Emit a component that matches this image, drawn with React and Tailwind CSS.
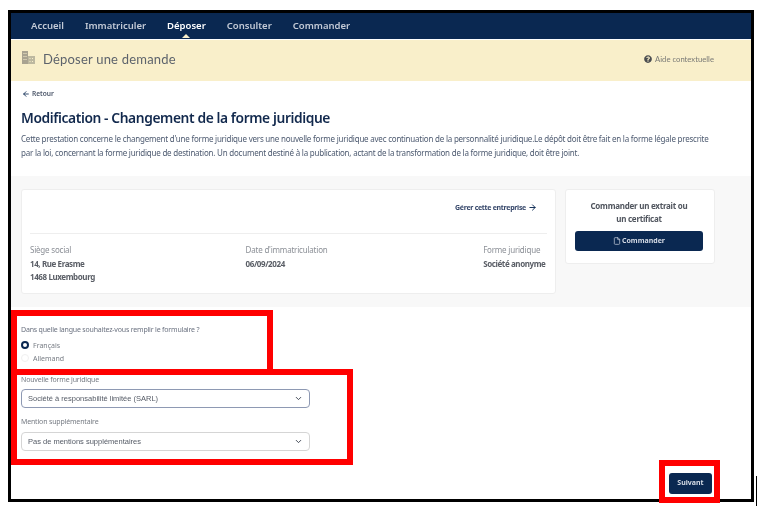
import React from "react";
import { ArrowLeft, ArrowRight, ChevronDown, File } from "lucide-react";
import { FaQuestionCircle } from "react-icons/fa";

const navItems = ["Accueil", "Immatriculer", "Déposer", "Consulter", "Commander"];

const BuildingIcon = () => (
  <svg width="15" height="15" viewBox="0 0 15 15" fill="none" className="text-[#8d8a7d]">
    <path d="M1 1h6v13H1z" fill="currentColor" opacity="0.75" />
    <path d="M7 6h7v8H7z" fill="currentColor" opacity="0.55" />
    <path d="M2.5 3h1v1h-1zM4.5 3h1v1h-1zM2.5 6h1v1h-1zM4.5 6h1v1h-1zM2.5 9h1v1h-1zM4.5 9h1v1h-1zM8.5 8h1v1h-1zM11 8h1v1h-1zM8.5 11h1v1h-1zM11 11h1v1h-1z" fill="#f9efca" />
  </svg>
);

const SelectBox = ({ value, className }) => (
  <div
    className={`flex h-[19px] w-[289px] items-center justify-between rounded-[4px] border bg-white pl-[6px] pr-[6px] font-['Liberation_Sans',sans-serif] text-[7.5px] text-[#555b66] ${className}`}
  >
    <span>{value}</span>
    <ChevronDown size={9} strokeWidth={2.5} className="text-[#3b4250]" />
  </div>
);

const InfoColumn = ({ label, children, className }) => (
  <div className={`flex flex-col ${className}`}>
    <span className="text-[8px] leading-[14px] tracking-[-0.2px] text-[#8b8f96]">{label}</span>
    {children}
  </div>
);

const Value = ({ children }) => (
  <span className="text-[8px] font-bold leading-[13.5px] tracking-[-0.4px] text-[#5a5e66]">{children}</span>
);

export default function App() {
  return (
    <div className="relative h-[512px] w-[766px] overflow-hidden bg-white font-['Noto_Sans',sans-serif]">
      <div className="ml-2 mt-[10px] flex h-[492px] w-[746px] flex-col border-[3px] border-black bg-white blur-[0.4px]">
        <nav className="flex h-[26px] shrink-0 items-center gap-[21px] bg-[#0a2851] pl-[20px] text-[9.5px] font-semibold text-[#c3cad6]">
          {navItems.map((item) => (
            <span key={item} className={`relative ${item === "Déposer" ? "text-white" : ""}`}>
              {item}
              {item === "Déposer" && (
                <span className="absolute left-1/2 top-[15px] -ml-1 h-0 w-0 border-x-4 border-b-4 border-x-transparent border-b-[#f9efca]" />
              )}
            </span>
          ))}
        </nav>
        <div className="mt-px flex h-[41px] shrink-0 items-center justify-between bg-[#f9efca] pl-[10px] pr-[37px]">
          <div className="-mt-[2px] flex items-center gap-[7px]">
            <span className="-mt-[5px]">
              <BuildingIcon />
            </span>
            <span className="font-['Lato',sans-serif] text-[13px] tracking-[0.2px] text-[#5d636c]">
              Déposer une demande
            </span>
          </div>
          <div className="-mt-[2px] flex items-center gap-[3px] font-['Lato',sans-serif] text-[7.7px] text-[#7a7a76]">
            <FaQuestionCircle size={8} className="text-[#4b4d50]" />
            <span>Aide contextuelle</span>
          </div>
        </div>
        <div className="flex flex-col px-[10px] pt-[8px]">
          <div className="flex items-center gap-[2px] pl-px text-[6.6px] font-semibold text-[#4a5568]">
            <ArrowLeft size={8} strokeWidth={2.5} className="text-[#0a2851]" />
            <span>Retour</span>
          </div>
          <h1 className="mt-[8px] text-[13.8px] font-semibold leading-[22px] tracking-[-0.4px] text-[#12294d]">
            Modification - Changement de la forme juridique
          </h1>
          <p className="mt-[3px] w-[700px] text-[8px] leading-[14px] tracking-[-0.22px] text-[#4d5a70]">
            Cette prestation concerne le changement d'une forme juridique vers une nouvelle forme juridique avec continuation de la personnalité juridique.Le dépôt doit être fait en la forme légale prescrite par la loi, concernant la forme juridique de destination. Un document destiné à la publication, actant de la transformation de la forme juridique, doit être joint.
          </p>
        </div>
        <section className="mt-[16px] flex h-[131px] shrink-0 items-start gap-[9px] bg-[#f8f8f8] px-[10px] pt-[13px]">
          <div className="flex h-[105px] w-[535px] flex-col rounded-[3px] border border-[#eeeeee] bg-white px-[8px]">
            <div className="flex h-[44px] shrink-0 items-center justify-end gap-[2px] border-b border-[#eeeeee] pb-[7px] pr-[10px] text-[7px] font-bold tracking-[-0.3px] text-[#36476a]">
              <span>Gérer cette entreprise</span>
              <ArrowRight size={9} strokeWidth={2.5} className="text-[#0a2851]" />
            </div>
            <div className="flex pt-[9px]">
              <InfoColumn label="Siège social" className="w-[216px]">
                <Value>14, Rue Erasme</Value>
                <Value>1468 Luxembourg</Value>
              </InfoColumn>
              <InfoColumn label="Date d'immatriculation" className="w-[238px]">
                <Value>06/09/2024</Value>
              </InfoColumn>
              <InfoColumn label="Forme juridique" className="w-[64px] whitespace-nowrap">
                <Value>Société anonyme</Value>
              </InfoColumn>
            </div>
          </div>
          <div className="flex h-[75px] w-[150px] flex-col items-center rounded-[3px] border border-[#eeeeee] bg-white pl-[9px] pr-[11px] pt-[9px]">
            <p className="text-center text-[8px] font-bold leading-[13px] tracking-[-0.25px] text-[#50555e]">
              Commander un extrait ou
              <br />
              un certificat
            </p>
            <button className="mt-[6px] flex h-[20px] w-[128px] shrink-0 items-center justify-center gap-[1px] rounded-[3px] bg-[#0a2851] text-[7px] font-bold text-[#d5dbe5]">
              <File size={8} />
              Commander
            </button>
          </div>
        </section>
        <form className="flex flex-1 flex-col px-[10px] pt-[18px]">
          <p className="text-[7px] leading-[10px] tracking-[-0.19px] text-[#6b7280]">
            Dans quelle langue souhaitez-vous remplir le formulaire ?
          </p>
          <div className="mt-[4px] flex items-center gap-[4px] text-[7px] leading-[13px] text-[#777c84]">
            <span className="h-[8px] w-[8px] rounded-full border-[2.5px] border-[#0a2851] bg-white" />
            Français
          </div>
          <div className="flex items-center gap-[4px] text-[7px] leading-[13px] text-[#777c84]">
            <span className="h-[8px] w-[8px] rounded-full border border-[#f0f0f0] bg-white" />
            Allemand
          </div>
          <label className="mt-[10px] text-[7px] leading-[10px] tracking-[-0.17px] text-[#777c84]">Nouvelle forme juridique</label>
          <SelectBox value="Société à responsabilité limitée (SARL)" className="mt-[4px] border-[#8e99b3]" />
          <label className="mt-[9px] text-[7px] leading-[10px] tracking-[-0.17px] text-[#777c84]">Mention supplémentaire</label>
          <SelectBox value="Pas de mentions supplémentaires" className="mt-[5px] border-[#d5d5d5]" />
          <div className="mt-[22px] flex justify-end pr-[29px]">
            <button type="button" className="h-[21px] w-[43px] rounded-[3px] bg-[#0a2851] text-[7px] font-bold text-[#d5dbe5]">
              Suivant
            </button>
          </div>
        </form>
      </div>
      {/* red annotation boxes drawn over the screenshot */}
      <div className="absolute left-[11px] top-[310px] h-[65px] w-[262px] border-[6px] border-[#ff0000]" />
      <div className="absolute left-[11px] top-[369px] h-[96px] w-[342px] border-[6px] border-[#ff0000]" />
      <div className="absolute left-[659px] top-[460px] h-[43px] w-[61px] border-[6px] border-[#ff0000]" />
      <div className="absolute left-[756px] top-[476px] h-[30px] w-px bg-black" />
    </div>
  );
}
